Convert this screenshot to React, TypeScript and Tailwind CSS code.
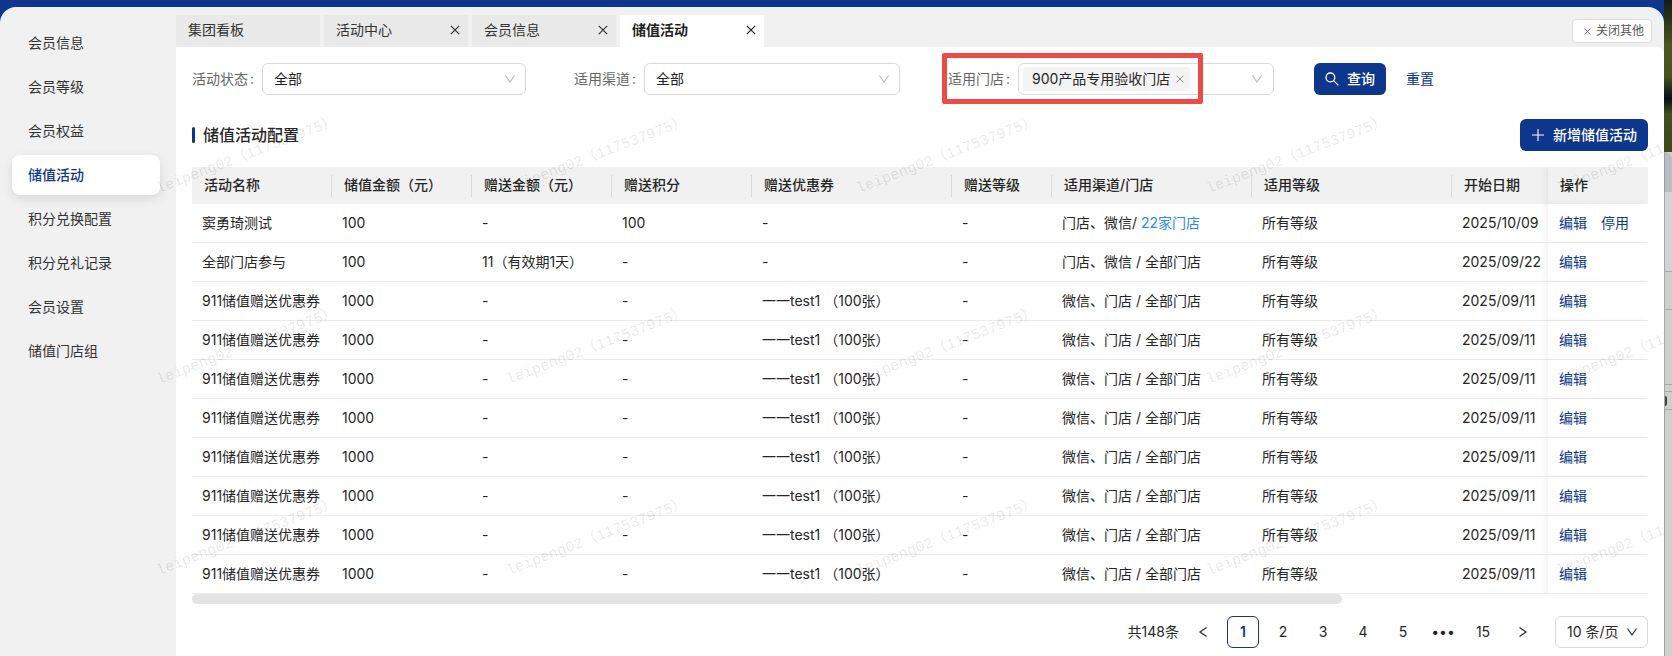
import React, { useState } from 'react';

const NAV_ITEMS = ['会员信息', '会员等级', '会员权益', '储值活动', '积分兑换配置', '积分兑礼记录', '会员设置', '储值门店组'];

const TABS = [
    { label: '集团看板', closable: false },
    { label: '活动中心', closable: true },
    { label: '会员信息', closable: true },
    { label: '储值活动', closable: true },
];

const COLUMNS = ['活动名称', '储值金额（元）', '赠送金额（元）', '赠送积分', '赠送优惠券', '赠送等级', '适用渠道/门店', '适用等级', '开始日期'];

interface Activity {
    name: string;
    amount: string;
    bonus: string;
    points: string;
    coupon: string;
    channel: string;
    storeLink?: string;
    start: string;
    canDisable?: boolean;
}

const couponActivity: Activity = {
    name: '911储值赠送优惠券',
    amount: '1000',
    bonus: '-',
    points: '-',
    coupon: '一一test1 （100张）',
    channel: '微信、门店 / 全部门店',
    start: '2025/09/11',
};

const ACTIVITIES: Activity[] = [
    { name: '窦勇琦测试', amount: '100', bonus: '-', points: '100', coupon: '-', channel: '门店、微信/ ', storeLink: '22家门店', start: '2025/10/09', canDisable: true },
    { name: '全部门店参与', amount: '100', bonus: '11（有效期1天）', points: '-', coupon: '-', channel: '门店、微信 / 全部门店', start: '2025/09/22' },
    ...Array.from({ length: 8 }, () => couponActivity),
];

const CloseIcon: React.FC<{ className?: string }> = ({ className }) => (
    <svg viewBox="0 0 10 10" className={className} fill="none" stroke="currentColor" strokeWidth="1.2" aria-hidden="true">
        <path d="M0.8 0.8 9.2 9.2M9.2 0.8 0.8 9.2" />
    </svg>
);

const ChevronDown: React.FC<{ className?: string }> = ({ className }) => (
    <svg viewBox="0 0 12 12" className={className} fill="none" stroke="currentColor" strokeWidth="1.2" aria-hidden="true">
        <path d="M1.5 2.5 6 9 10.5 2.5" />
    </svg>
);

const FilterLabel: React.FC<{ id: string; label: string }> = ({ id, label }) => (
    <label htmlFor={id} className="flex w-[70px] shrink-0 gap-0.5 whitespace-nowrap text-[#666]">
        {label}
        <span>:</span>
    </label>
);

const FilterSelect: React.FC<{ id: string; label: string; className: string }> = ({ id, label, className }) => (
    <div className="flex items-center">
        <FilterLabel id={id} label={label} />
        <div className={`relative ${className}`}>
            <select id={id} className="h-8 w-full appearance-none rounded-md border border-[#d9d9d9] bg-white px-[11px] text-[#222]">
                <option>全部</option>
            </select>
            <ChevronDown className="pointer-events-none absolute top-[10px] right-[10px] size-3 text-[#bbb]" />
        </div>
    </div>
);

const Watermark: React.FC = () => (
    <div className="pointer-events-none absolute inset-0 z-30 mr-2 overflow-hidden" aria-hidden="true">
        <div className="grid w-max auto-rows-[191px] grid-cols-[repeat(5,350px)] pt-15 pl-18">
            {Array.from({ length: 15 }, (_, i) => (
                <div key={i} className="flex items-center justify-center">
                    <span className="-rotate-[21deg] font-['Liberation_Mono','Noto_Sans_CJK_SC',monospace] text-[15px] whitespace-nowrap text-black/10">
                        leipeng02（117537975）
                    </span>
                </div>
            ))}
        </div>
    </div>
);

// sliver of the desktop and of the window behind this one
const DesktopEdge: React.FC = () => (
    <div className="flex w-2 shrink-0 flex-col bg-[#cfcfcf]">
        <div className="h-[152px] bg-linear-to-b from-[#141c10] via-[#4a5722] via-30% to-[#3c4a1c]">
            <div className="h-full bg-linear-to-b from-transparent from-50% via-[#04101c] via-65% to-transparent to-75%" />
        </div>
        <div className="h-10 rounded-tr-lg border-l border-[#9a9ea4] bg-[#b7bcc3]" />
        <div className="h-20 border-b border-l border-[#a8a8a8] bg-[#d2d3d5]" />
        <div className="h-[38px] border-b border-l border-[#a8a8a8]" />
        <div className="h-[75px] border-b border-l border-[#a8a8a8]" />
        <div className="h-[7px] border-b border-l border-[#a8a8a8]" />
        <div className="flex h-[18px] items-center border-b border-l border-[#a8a8a8]">
            <div className="h-[10px] w-[2px] rounded-r-sm bg-[#444]" />
        </div>
        <div className="flex-1 border-l border-[#a0a0a0]" />
    </div>
);

const App: React.FC = () => {
    const [activeNav, setActiveNav] = useState('储值活动');
    const [activeTab, setActiveTab] = useState(3);
    const [page, setPage] = useState('1');

    return (
        <div className="relative flex min-h-screen overflow-hidden font-[Inter,'Noto_Sans_CJK_SC',sans-serif] text-sm text-[#262626]">
            <div className="flex min-w-0 flex-1 flex-col bg-[#0d368c] pt-[7px]">
                <div className="flex flex-1 overflow-hidden rounded-t-2xl bg-[#f1f1f1]">
                    <nav className="flex w-44 shrink-0 flex-col gap-1 px-3 py-4">
                        {NAV_ITEMS.map(item => (
                            <button
                                key={item}
                                onClick={() => setActiveNav(item)}
                                className={`h-10 w-[148px] rounded-lg px-4 text-left ${item === activeNav ? 'bg-white font-medium text-[#0d368c] shadow-[0_4px_12px_rgba(0,0,0,0.1)]' : 'text-[#333]'}`}
                            >
                                {item}
                            </button>
                        ))}
                    </nav>

                    <main className="flex min-w-0 flex-1 flex-col">
                        <div className="flex items-end justify-between pt-2 pr-3">
                            <div className="flex gap-1">
                                {TABS.map((tab, i) => (
                                    <div key={tab.label} className={`flex h-8 w-36 items-center justify-between pr-2 pb-0.5 pl-3 ${i === activeTab ? 'bg-white font-bold text-[#222]' : 'bg-[#e9e9e9] text-[#333]'}`}>
                                        <button onClick={() => setActiveTab(i)}>{tab.label}</button>
                                        {tab.closable && (
                                            <button aria-label={`关闭${tab.label}`}>
                                                <CloseIcon className="size-[10px]" />
                                            </button>
                                        )}
                                    </div>
                                ))}
                            </div>
                            <button className="mb-1 flex h-6 w-20 items-center justify-end gap-[5px] rounded border border-[#dcdcdc] bg-white pr-[7px] text-xs text-[#555]">
                                <CloseIcon className="size-[7px]" />
                                关闭其他
                            </button>
                        </div>

                        <div className="flex flex-1 flex-col rounded-tr-lg bg-white px-4 pt-4 pb-2">
                            <div className="flex items-center">
                                <div className="flex gap-12">
                                    <FilterSelect id="status" label="活动状态" className="w-[264px]" />
                                    <FilterSelect id="channel" label="适用渠道" className="w-64" />
                                    <div className="relative flex items-center">
                                        <FilterLabel id="store" label="适用门店" />
                                        <div className="flex h-8 w-64 items-center rounded-md border border-[#d9d9d9] bg-white pr-[10px] pl-1">
                                            <span className="flex h-6 shrink-0 items-center gap-[6px] rounded bg-[#f3f3f3] pr-[6px] pl-[9px] whitespace-nowrap">
                                                900产品专用验收门店
                                                <button aria-label="移除门店" className="text-[#888]"><CloseIcon className="size-2" /></button>
                                            </span>
                                            <input id="store" type="text" className="w-full min-w-0 flex-1 outline-none" />
                                            <ChevronDown className="size-3 shrink-0 text-[#bbb]" />
                                        </div>
                                        <div className="pointer-events-none absolute -top-[10px] -left-[6px] h-[51px] w-[261px] rounded-xs border-5 border-[#ef4b46]" />
                                    </div>
                                </div>
                                <button className="ml-10 flex h-8 w-[72px] items-center justify-center gap-2 rounded-md bg-[#0d368c] font-medium text-white">
                                    <svg viewBox="0 0 14 14" className="size-[14px]" fill="none" stroke="currentColor" strokeWidth="1.3" aria-hidden="true">
                                        <circle cx="5.4" cy="5.4" r="4.4" />
                                        <path d="m8.6 8.6 4.8 4.8" />
                                    </svg>
                                    查询
                                </button>
                                <button className="ml-5 text-[#0d368c]">重置</button>
                            </div>

                            <div className="mt-6 flex items-center justify-between">
                                <h1 className="flex items-center gap-2 text-base font-medium">
                                    <span className="h-4 w-[3px] rounded-xs bg-[#0d368c]" />
                                    储值活动配置
                                </h1>
                                <button className="flex h-8 w-32 items-center justify-center gap-2 rounded-md bg-[#0d368c] font-medium text-white">
                                    <svg viewBox="0 0 14 14" className="size-[14px]" fill="none" stroke="currentColor" strokeWidth="1.1" aria-hidden="true">
                                        <path d="M7 1v12M1 7h12" />
                                    </svg>
                                    新增储值活动
                                </button>
                            </div>

                            <div className="mt-4 overflow-x-auto">
                                <table className="w-full min-w-[1456px] table-fixed border-separate border-spacing-0">
                                    <colgroup>
                                        <col className="w-[140px]" />
                                        <col className="w-[140px]" />
                                        <col className="w-[140px]" />
                                        <col className="w-[140px]" />
                                        <col className="w-[200px]" />
                                        <col className="w-[100px]" />
                                        <col className="w-[200px]" />
                                        <col className="w-[200px]" />
                                        <col />
                                        <col className="w-[100px]" />
                                    </colgroup>
                                    <thead>
                                        <tr className="h-[37px] text-left whitespace-nowrap *:bg-[#f1f1f1] *:p-0 *:font-medium">
                                            {COLUMNS.map((col, i) => (
                                                <th key={col}>
                                                    <div className={`h-[22px] pl-3 leading-5 ${i < 8 ? 'border-r border-[#d9d9d9]' : ''}`}>{col}</div>
                                                </th>
                                            ))}
                                            <th className="sticky right-0 shadow-[-3px_0_5px_rgba(0,0,0,0.05)]">
                                                <div className="h-[22px] pl-3 leading-5">操作</div>
                                            </th>
                                        </tr>
                                    </thead>
                                    <tbody>
                                        {ACTIVITIES.map((row, i) => (
                                            <tr key={i} className="h-[39px] whitespace-nowrap *:border-b *:border-[#ebebeb] *:p-0 *:pl-[10px]">
                                                <td>{row.name}</td>
                                                <td>{row.amount}</td>
                                                <td>{row.bonus}</td>
                                                <td>{row.points}</td>
                                                <td>{row.coupon}</td>
                                                <td>-</td>
                                                <td>
                                                    {row.channel}
                                                    {row.storeLink && <a href="#stores" className="text-[#2a8af0]">{row.storeLink}</a>}
                                                </td>
                                                <td>所有等级</td>
                                                <td>{row.start}</td>
                                                <td className="sticky right-0 bg-white shadow-[-3px_0_5px_rgba(0,0,0,0.05)]">
                                                    <div className="flex gap-[14px] pl-[1px] text-[#0d368c]">
                                                        <button>编辑</button>
                                                        {row.canDisable && <button>停用</button>}
                                                    </div>
                                                </td>
                                            </tr>
                                        ))}
                                    </tbody>
                                </table>
                            </div>
                            <div className="h-[10px] w-[79%] rounded-full bg-[#e3e3e3]" />

                            <div className="mt-3 flex items-center justify-end gap-2">
                                <span>共148条</span>
                                <button aria-label="上一页" className="flex size-8 items-center justify-center">
                                    <ChevronDown className="size-3 rotate-90" />
                                </button>
                                {['1', '2', '3', '4', '5', '•••', '15'].map(p => (
                                    <button
                                        key={p}
                                        onClick={() => setPage(p)}
                                        className={`size-8 rounded-md ${p === page ? 'border border-[#0d368c] font-semibold text-[#0d368c]' : ''}`}
                                    >
                                        {p}
                                    </button>
                                ))}
                                <button aria-label="下一页" className="flex size-8 items-center justify-center">
                                    <ChevronDown className="size-3 -rotate-90" />
                                </button>
                                <div className="relative ml-2">
                                    <select aria-label="每页条数" className="h-8 w-[93px] appearance-none rounded-md border border-[#d9d9d9] bg-white pl-[11px]">
                                        <option>10 条/页</option>
                                    </select>
                                    <ChevronDown className="pointer-events-none absolute top-[10px] right-[10px] size-3" />
                                </div>
                            </div>
                        </div>
                    </main>
                </div>
            </div>
            <DesktopEdge />
            <Watermark />
        </div>
    );
};

export default App;
